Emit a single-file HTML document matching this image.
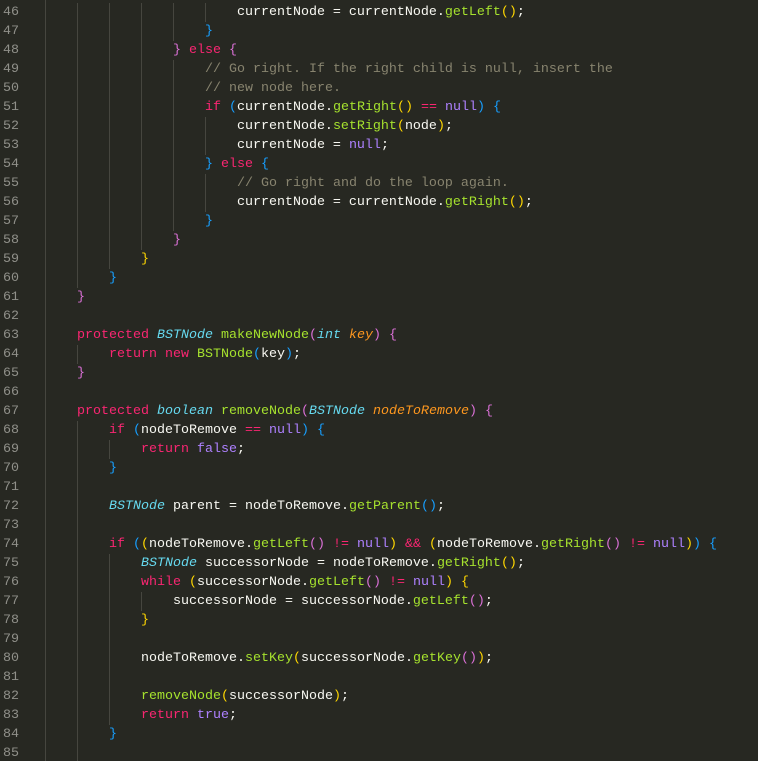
<!DOCTYPE html>
<html><head><meta charset="utf-8"><style>
html,body{margin:0;padding:0;background:#272822;width:758px;height:761px;overflow:hidden}
body{position:relative;font-family:"Liberation Mono",monospace;font-size:13.33px;color:#f8f8f2}
.gut{position:absolute;left:45px;top:0;width:1px;height:761px;background:#46463f}
.ln{position:absolute;left:0;height:19px;line-height:19px;width:758px;white-space:pre;margin-top:2px}
.num{position:absolute;left:3px;color:#90908a}
.code{position:absolute;left:45px}
.g{position:absolute;left:77px;top:0;height:19px;background:repeating-linear-gradient(to right,#46463f 0 1px,transparent 1px 32px)}
.k{color:#f92672}.t{color:#66d9ef;font-style:italic}.f{color:#a6e22e}.a{color:#fd971f;font-style:italic}
.n{color:#ae81ff}.c{color:#88846f}.y{color:#ffd700}.p{color:#da70d6}.b{color:#179fff}
</style></head><body>
<div class="gut"></div>
<div class="ln" style="top:1px"><span class="g" style="width:129px"></span><span class="num">46</span><span class="code">                        currentNode = currentNode.<span class="f">getLeft</span><span class="y">()</span>;</span></div>
<div class="ln" style="top:20px"><span class="g" style="width:97px"></span><span class="num">47</span><span class="code">                    <span class="b">}</span></span></div>
<div class="ln" style="top:39px"><span class="g" style="width:65px"></span><span class="num">48</span><span class="code">                <span class="p">}</span> <span class="k">else</span> <span class="p">{</span></span></div>
<div class="ln" style="top:58px"><span class="g" style="width:97px"></span><span class="num">49</span><span class="code">                    <span class="c">// Go right. If the right child is null, insert the</span></span></div>
<div class="ln" style="top:77px"><span class="g" style="width:97px"></span><span class="num">50</span><span class="code">                    <span class="c">// new node here.</span></span></div>
<div class="ln" style="top:96px"><span class="g" style="width:97px"></span><span class="num">51</span><span class="code">                    <span class="k">if</span> <span class="b">(</span>currentNode.<span class="f">getRight</span><span class="y">()</span> <span class="k">==</span> <span class="n">null</span><span class="b">)</span> <span class="b">{</span></span></div>
<div class="ln" style="top:115px"><span class="g" style="width:129px"></span><span class="num">52</span><span class="code">                        currentNode.<span class="f">setRight</span><span class="y">(</span>node<span class="y">)</span>;</span></div>
<div class="ln" style="top:134px"><span class="g" style="width:129px"></span><span class="num">53</span><span class="code">                        currentNode = <span class="n">null</span>;</span></div>
<div class="ln" style="top:153px"><span class="g" style="width:97px"></span><span class="num">54</span><span class="code">                    <span class="b">}</span> <span class="k">else</span> <span class="b">{</span></span></div>
<div class="ln" style="top:172px"><span class="g" style="width:129px"></span><span class="num">55</span><span class="code">                        <span class="c">// Go right and do the loop again.</span></span></div>
<div class="ln" style="top:191px"><span class="g" style="width:129px"></span><span class="num">56</span><span class="code">                        currentNode = currentNode.<span class="f">getRight</span><span class="y">()</span>;</span></div>
<div class="ln" style="top:210px"><span class="g" style="width:97px"></span><span class="num">57</span><span class="code">                    <span class="b">}</span></span></div>
<div class="ln" style="top:229px"><span class="g" style="width:65px"></span><span class="num">58</span><span class="code">                <span class="p">}</span></span></div>
<div class="ln" style="top:248px"><span class="g" style="width:33px"></span><span class="num">59</span><span class="code">            <span class="y">}</span></span></div>
<div class="ln" style="top:267px"><span class="g" style="width:1px"></span><span class="num">60</span><span class="code">        <span class="b">}</span></span></div>
<div class="ln" style="top:286px"><span class="num">61</span><span class="code">    <span class="p">}</span></span></div>
<div class="ln" style="top:305px"><span class="num">62</span></div>
<div class="ln" style="top:324px"><span class="num">63</span><span class="code">    <span class="k">protected</span> <span class="t">BSTNode</span> <span class="f">makeNewNode</span><span class="p">(</span><span class="t">int</span> <span class="a">key</span><span class="p">)</span> <span class="p">{</span></span></div>
<div class="ln" style="top:343px"><span class="g" style="width:1px"></span><span class="num">64</span><span class="code">        <span class="k">return</span> <span class="k">new</span> <span class="f">BSTNode</span><span class="b">(</span>key<span class="b">)</span>;</span></div>
<div class="ln" style="top:362px"><span class="num">65</span><span class="code">    <span class="p">}</span></span></div>
<div class="ln" style="top:381px"><span class="num">66</span></div>
<div class="ln" style="top:400px"><span class="num">67</span><span class="code">    <span class="k">protected</span> <span class="t">boolean</span> <span class="f">removeNode</span><span class="p">(</span><span class="t">BSTNode</span> <span class="a">nodeToRemove</span><span class="p">)</span> <span class="p">{</span></span></div>
<div class="ln" style="top:419px"><span class="g" style="width:1px"></span><span class="num">68</span><span class="code">        <span class="k">if</span> <span class="b">(</span>nodeToRemove <span class="k">==</span> <span class="n">null</span><span class="b">)</span> <span class="b">{</span></span></div>
<div class="ln" style="top:438px"><span class="g" style="width:33px"></span><span class="num">69</span><span class="code">            <span class="k">return</span> <span class="n">false</span>;</span></div>
<div class="ln" style="top:457px"><span class="g" style="width:1px"></span><span class="num">70</span><span class="code">        <span class="b">}</span></span></div>
<div class="ln" style="top:476px"><span class="g" style="width:1px"></span><span class="num">71</span></div>
<div class="ln" style="top:495px"><span class="g" style="width:1px"></span><span class="num">72</span><span class="code">        <span class="t">BSTNode</span> parent = nodeToRemove.<span class="f">getParent</span><span class="b">()</span>;</span></div>
<div class="ln" style="top:514px"><span class="g" style="width:1px"></span><span class="num">73</span></div>
<div class="ln" style="top:533px"><span class="g" style="width:1px"></span><span class="num">74</span><span class="code">        <span class="k">if</span> <span class="b">(</span><span class="y">(</span>nodeToRemove.<span class="f">getLeft</span><span class="p">()</span> <span class="k">!=</span> <span class="n">null</span><span class="y">)</span> <span class="k">&amp;&amp;</span> <span class="y">(</span>nodeToRemove.<span class="f">getRight</span><span class="p">()</span> <span class="k">!=</span> <span class="n">null</span><span class="y">)</span><span class="b">)</span> <span class="b">{</span></span></div>
<div class="ln" style="top:552px"><span class="g" style="width:33px"></span><span class="num">75</span><span class="code">            <span class="t">BSTNode</span> successorNode = nodeToRemove.<span class="f">getRight</span><span class="y">()</span>;</span></div>
<div class="ln" style="top:571px"><span class="g" style="width:33px"></span><span class="num">76</span><span class="code">            <span class="k">while</span> <span class="y">(</span>successorNode.<span class="f">getLeft</span><span class="p">()</span> <span class="k">!=</span> <span class="n">null</span><span class="y">)</span> <span class="y">{</span></span></div>
<div class="ln" style="top:590px"><span class="g" style="width:65px"></span><span class="num">77</span><span class="code">                successorNode = successorNode.<span class="f">getLeft</span><span class="p">()</span>;</span></div>
<div class="ln" style="top:609px"><span class="g" style="width:33px"></span><span class="num">78</span><span class="code">            <span class="y">}</span></span></div>
<div class="ln" style="top:628px"><span class="g" style="width:33px"></span><span class="num">79</span></div>
<div class="ln" style="top:647px"><span class="g" style="width:33px"></span><span class="num">80</span><span class="code">            nodeToRemove.<span class="f">setKey</span><span class="y">(</span>successorNode.<span class="f">getKey</span><span class="p">()</span><span class="y">)</span>;</span></div>
<div class="ln" style="top:666px"><span class="g" style="width:33px"></span><span class="num">81</span></div>
<div class="ln" style="top:685px"><span class="g" style="width:33px"></span><span class="num">82</span><span class="code">            <span class="f">removeNode</span><span class="y">(</span>successorNode<span class="y">)</span>;</span></div>
<div class="ln" style="top:704px"><span class="g" style="width:33px"></span><span class="num">83</span><span class="code">            <span class="k">return</span> <span class="n">true</span>;</span></div>
<div class="ln" style="top:723px"><span class="g" style="width:1px"></span><span class="num">84</span><span class="code">        <span class="b">}</span></span></div>
<div class="ln" style="top:742px"><span class="g" style="width:1px"></span><span class="num">85</span></div>
</body></html>
